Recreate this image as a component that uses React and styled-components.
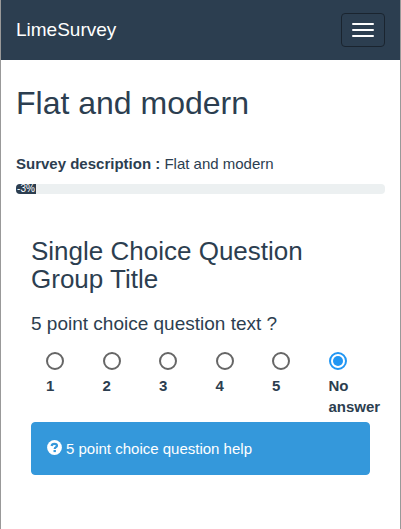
import React, { useState } from "react";
import styled, { createGlobalStyle } from "styled-components";

const GlobalStyle = createGlobalStyle`
  *, *::before, *::after { box-sizing: border-box; }
  body {
    margin: 0;
    background: #ffffff;
    color: #2c3e50;
    font: 15px/21px "Liberation Sans", Arial, sans-serif;
  }
`;

const Page = styled.div`
  min-height: 100vh;
  border: solid #999999;
  border-width: 0 1px;
`;

const Navbar = styled.nav`
  display: flex;
  align-items: center;
  justify-content: space-between;
  height: 60px;
  padding: 0 15px;
  background: #2c3e50;
`;

const Brand = styled.a`
  padding-bottom: 2px;
  color: #ffffff;
  font-size: 19px;
  text-decoration: none;
`;

const MenuButton = styled.button`
  display: grid;
  gap: 4px;
  padding: 9px 10px;
  border: 1px solid #1a242f;
  border-radius: 4px;
  background: transparent;
  cursor: pointer;
`;

const MenuBar = styled.span`
  width: 22px;
  height: 2px;
  border-radius: 1px;
  background: #ffffff;
`;

const Content = styled.main`
  padding: 26px 15px 0;
`;

const Title = styled.h1`
  margin: 0;
  font-size: 32px;
  line-height: 35px;
  font-weight: 400;
`;

const Description = styled.p`
  margin: 32px 0 10px;
`;

const Progress = styled.div`
  height: 10px;
  overflow: hidden;
  border-radius: 4px;
  background: #ecf0f1;
`;

const ProgressValue = styled.div`
  width: 20px;
  height: 10px;
  background: #2c3e50;
  color: #ffffff;
  font-size: 10px;
  line-height: 10px;
  text-align: center;
`;

const Group = styled.section`
  padding: 43px 15px 0;
`;

const GroupTitle = styled.h2`
  margin: 0;
  font-size: 26px;
  line-height: 28px;
  font-weight: 400;
`;

const Question = styled.fieldset`
  min-width: 0;
  margin: 20px 0 0;
  padding: 0;
  border: 0;
`;

const QuestionText = styled.legend`
  padding: 0;
  font-size: 19px;
  line-height: 21px;
`;

const Answers = styled.div`
  display: grid;
  grid-template-columns: repeat(6, minmax(0, 1fr));
  padding: 18px 0 5px;
`;

const Answer = styled.label`
  display: flex;
  flex-direction: column;
  gap: 5px;
  padding-left: 15px;
  font-weight: 700;
  cursor: pointer;
`;

const Radio = styled.input`
  appearance: none;
  display: grid;
  place-content: center;
  width: 18px;
  height: 18px;
  margin: 0;
  border: 2px solid #666666;
  border-radius: 50%;

  &:checked {
    border-color: #2196f3;
  }

  &:checked::before {
    content: "";
    width: 10px;
    height: 10px;
    border-radius: 50%;
    background: #2196f3;
  }
`;

const Help = styled.div`
  display: flex;
  align-items: center;
  gap: 4px;
  padding: 15px;
  border: 1px solid #3498db;
  border-radius: 4px;
  background: #3498db;
  color: #ffffff;
`;

const HelpIcon = styled.svg`
  flex: none;
  width: 15px;
  height: 15px;
  margin-bottom: 2px;
`;

const choices = ["1", "2", "3", "4", "5", "No answer"];

export default function App() {
  const [value, setValue] = useState("No answer");

  return (
    <Page>
      <GlobalStyle />
      <Navbar>
        <Brand href="#">LimeSurvey</Brand>
        <MenuButton type="button" aria-label="Toggle navigation">
          <MenuBar />
          <MenuBar />
          <MenuBar />
        </MenuButton>
      </Navbar>
      <Content>
        <Title>Flat and modern</Title>
        <Description>
          <strong>Survey description :</strong> Flat and modern
        </Description>
        <Progress>
          <ProgressValue>-3%</ProgressValue>
        </Progress>
        <Group>
          <GroupTitle>Single Choice Question Group Title</GroupTitle>
          <Question>
            <QuestionText>5 point choice question text ?</QuestionText>
            <Answers>
              {choices.map((choice) => (
                <Answer key={choice}>
                  <Radio
                    type="radio"
                    name="five-point"
                    value={choice}
                    checked={value === choice}
                    onChange={() => setValue(choice)}
                  />
                  {choice}
                </Answer>
              ))}
            </Answers>
          </Question>
          <Help>
            <HelpIcon viewBox="0 0 15 15" aria-hidden="true">
              <circle cx="7.5" cy="7.5" r="7.4" fill="#ffffff" />
              <path
                d="M4.6 6C4.8 4.4 5.8 3.8 7.4 3.8c1.7 0 2.6.7 2.6 1.9 0 1.5-2.3 1.4-2.3 3.3"
                fill="none"
                stroke="#3498db"
                strokeWidth="2.2"
              />
              <path d="M6.5 10h2.4v2.1H6.5z" fill="#3498db" />
            </HelpIcon>
            <span>5 point choice question help</span>
          </Help>
        </Group>
      </Content>
    </Page>
  );
}
